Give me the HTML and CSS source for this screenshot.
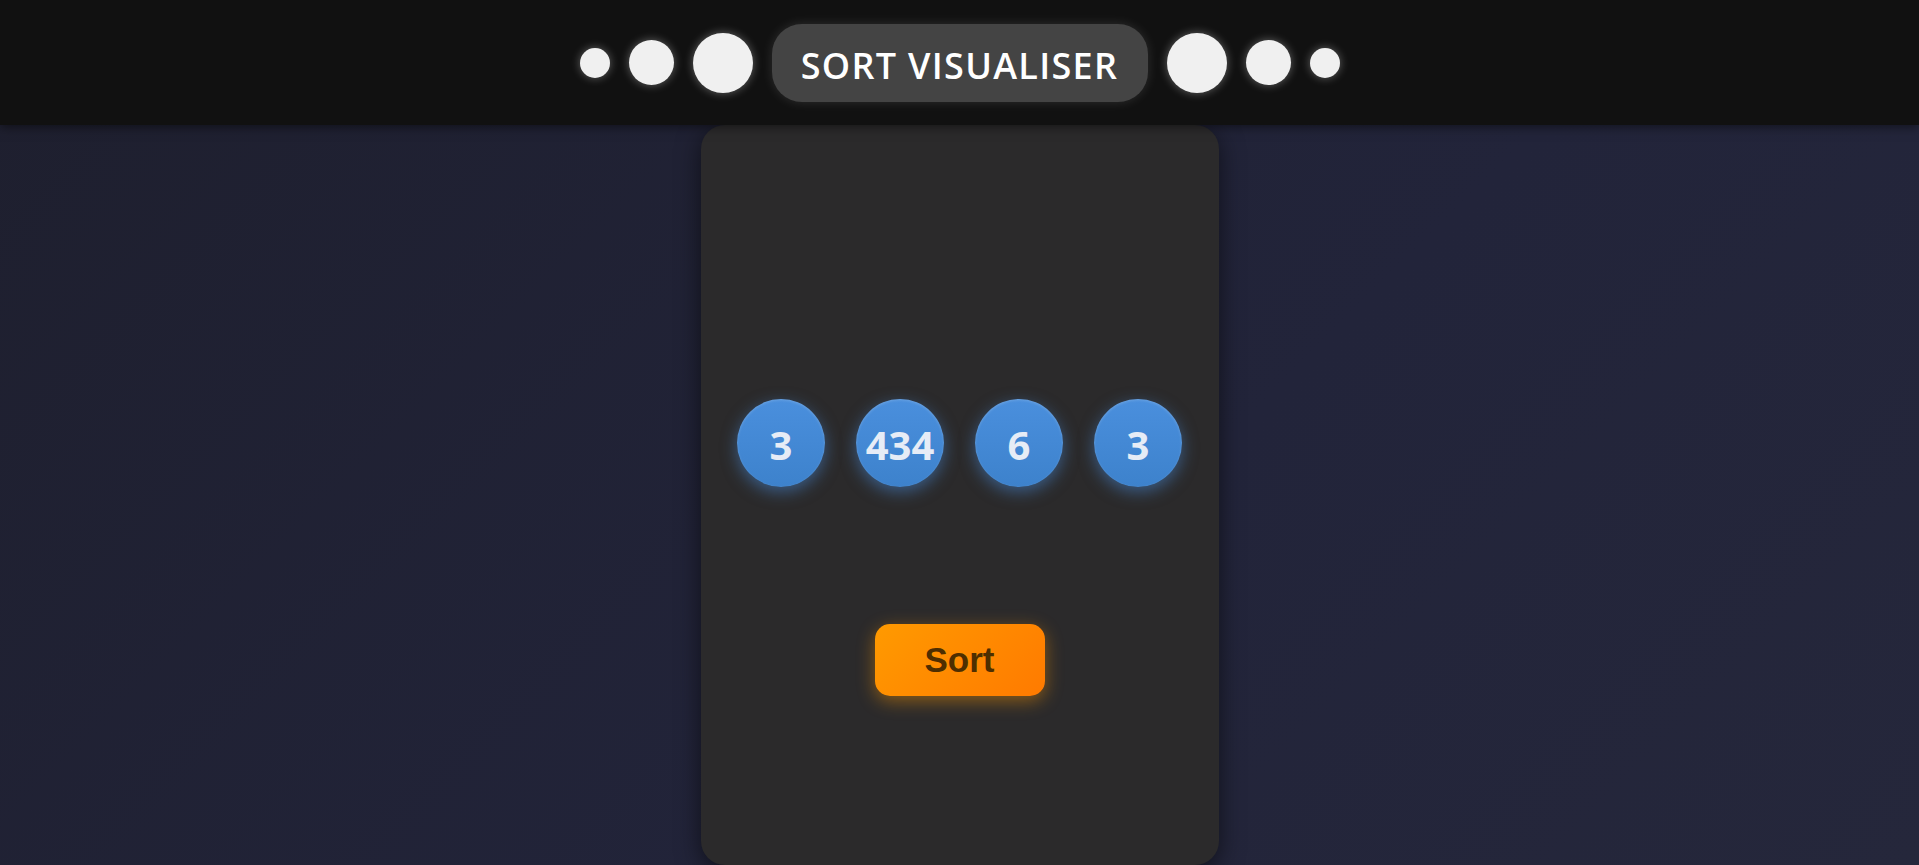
FILE: index.html
```html
<!DOCTYPE html>
<html lang="en">
<head>
<meta charset="utf-8">
<title>Sort Visualiser</title>
<link rel="stylesheet" href="styles.css">
</head>
<body>
<header class="topbar">
  <span class="dot dot-s"></span>
  <span class="dot dot-m"></span>
  <span class="dot dot-l"></span>
  <h1 class="title">SORT VISUALISER</h1>
  <span class="dot dot-l"></span>
  <span class="dot dot-m"></span>
  <span class="dot dot-s"></span>
</header>
<main class="stage">
  <section class="card">
    <div class="balls">
      <div class="ball">3</div>
      <div class="ball">434</div>
      <div class="ball">6</div>
      <div class="ball">3</div>
    </div>
    <button class="sort-btn">Sort</button>
  </section>
</main>
</body>
</html>
```

FILE: styles.css
```css
* { box-sizing: border-box; }
html, body {
  margin: 0;
  padding: 0;
  height: 100%;
  overflow: hidden;
}
body {
  background: linear-gradient(135deg, #1e1f2e 0%, #22243a 60%, #25273b 100%);
  font-family: "Open Sans", "Noto Sans", sans-serif;
}
.topbar {
  height: 125px;
  background: #111111;
  display: flex;
  align-items: center;
  justify-content: center;
  gap: 19px;
  box-shadow: 0 2px 10px rgba(0,0,0,0.5);
  position: relative;
  z-index: 2;
}
.dot {
  display: block;
  border-radius: 50%;
  background: #f0f0f0;
  box-shadow: 0 0 10px rgba(255,255,255,0.35);
  flex: none;
}
.dot-s { width: 30px; height: 30px; }
.dot-m { width: 45px; height: 45px; }
.dot-l { width: 60px; height: 60px; }
.title {
  margin: 0;
  height: 78px;
  width: 376px;
  border-radius: 30px;
  background: #444444;
  color: #ffffff;
  font-family: "Open Sans", sans-serif;
  font-weight: 600;
  font-size: 36px;
  letter-spacing: 1.3px;
  display: flex;
  align-items: center;
  justify-content: center;
  padding-top: 5px;
  box-shadow: 0 0 12px rgba(255,255,255,0.12);
}
.stage {
  display: flex;
  justify-content: center;
}
.card {
  width: 518px;
  height: 740px;
  background: #2b2a2b;
  border-radius: 24px;
  box-shadow: 0 6px 24px rgba(0,0,0,0.55);
  display: flex;
  flex-direction: column;
  align-items: center;
  padding-top: 274px;
}
.balls {
  display: flex;
  gap: 31px;
}
.ball {
  width: 88px;
  height: 88px;
  border-radius: 50%;
  background: linear-gradient(180deg, #4a8fdd 0%, #3d82cc 100%);
  box-shadow: 0 5px 16px rgba(74,144,226,0.5), inset 0 1px 3px rgba(255,255,255,0.2);
  color: #e6ecf6;
  font-family: "Open Sans", sans-serif;
  font-weight: 700;
  font-size: 40px;
  display: flex;
  align-items: center;
  justify-content: center;
  padding-top: 2px;
}
.sort-btn {
  margin-top: 137px;
  width: 170px;
  height: 72px;
  border: none;
  border-radius: 15px;
  background: linear-gradient(135deg, #ff9a00 0%, #ff7a00 100%);
  box-shadow: 0 5px 18px rgba(255,152,0,0.45);
  color: #4e2e00;
  font-family: "Liberation Sans", Arial, sans-serif;
  font-weight: bold;
  font-size: 35px;
  padding: 0;
  cursor: pointer;
}
```
